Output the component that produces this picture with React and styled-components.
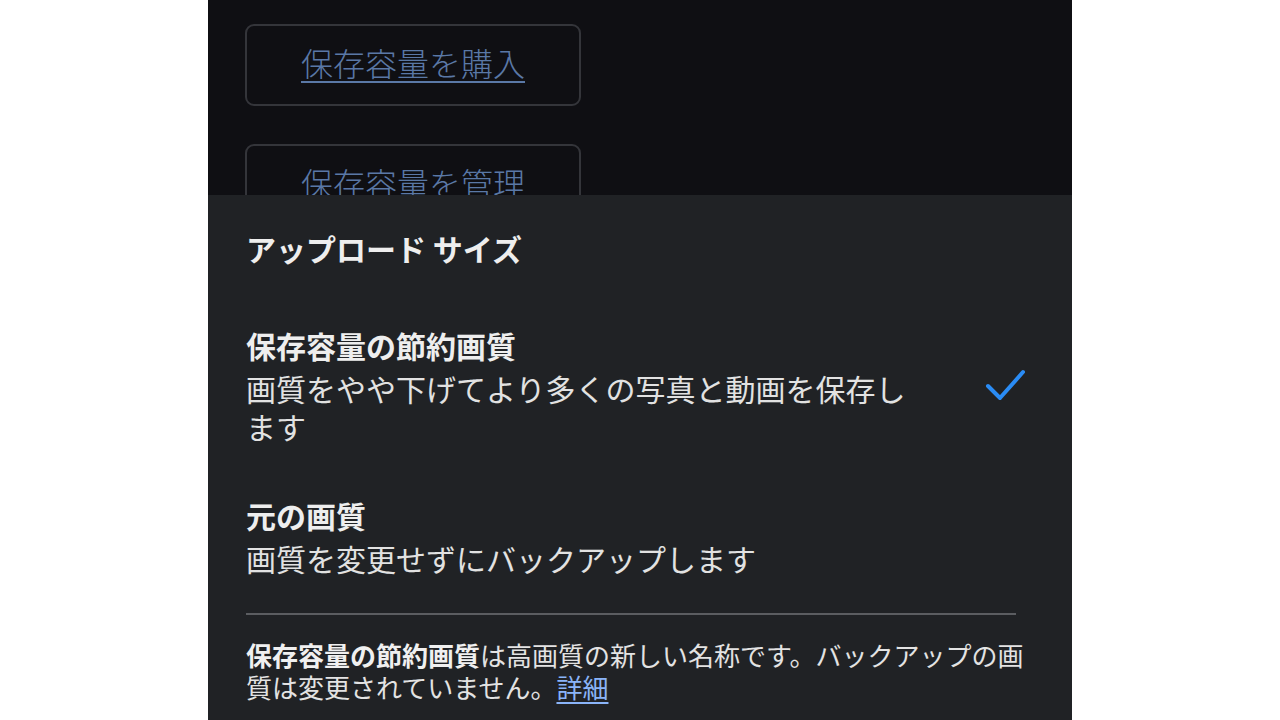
import React from 'react';
import styled, { createGlobalStyle } from 'styled-components';

const GlobalStyle = createGlobalStyle`
    body {
        margin: 0;
        background: #ffffff;
        font-family: "Noto Sans CJK JP", "Noto Sans", sans-serif;
    }
`;

const Screen = styled.div`
    width: 864px;
    height: 720px;
    margin-left: 208px;
    display: flex;
    flex-direction: column;
    overflow: hidden;
    background: #0f0f13;
`;

const Backdrop = styled.div`
    height: 195px;
    flex-shrink: 0;
    padding: 24px 0 0 37px;
    box-sizing: border-box;
    display: flex;
    flex-direction: column;
    gap: 38px;
    overflow: hidden;
`;

const StorageButton = styled.div`
    width: 336px;
    height: 82px;
    flex-shrink: 0;
    box-sizing: border-box;
    padding-bottom: 7px;
    border: 2px solid #34353a;
    border-radius: 9px;
    display: flex;
    align-items: center;
    justify-content: center;
    font-size: 32px;
    font-weight: 300;
    color: #5a78a6;
    text-decoration: ${(p) => (p.$underline ? 'underline' : 'none')};
    text-decoration-thickness: 2px;
    text-underline-offset: 5px;
`;

const Sheet = styled.div`
    flex: 1;
    background: #202225;
    padding: 33px 46px 0 38px;
    color: #e3e3e3;
`;

const SheetTitle = styled.div`
    font-size: 30px;
    font-weight: 700;
    line-height: 40px;
    color: #eeeeee;
`;

const Option = styled.div`
    display: flex;
    align-items: center;
    margin-top: ${(p) => p.$top}px;
`;

const OptionText = styled.div`
    max-width: 680px;
`;

const OptionTitle = styled.div`
    font-size: 30px;
    font-weight: 700;
    line-height: 40px;
    color: #eeeeee;
`;

const OptionDesc = styled.div`
    margin-top: 4px;
    font-size: 30px;
    line-height: 38px;
    color: #e2e2e2;
`;

const Check = styled.svg`
    margin-left: auto;
    flex-shrink: 0;
`;

const Divider = styled.div`
    height: 2px;
    background: #5b5d61;
    margin: 36px 10px 0 0;
`;

const Footer = styled.p`
    margin: 24px 0 0;
    width: 790px;
    font-size: 26px;
    line-height: 32px;
    color: #e3e3e3;

    b {
        font-weight: 700;
        color: #f0f0f0;
    }
`;

const Link = styled.a`
    color: #8ab4f8;
    text-decoration: underline;
    text-underline-offset: 4px;
`;

const App = () => {
    return (
        <>
            <GlobalStyle />
            <Screen>
                <Backdrop>
                    <StorageButton $underline>保存容量を購入</StorageButton>
                    <StorageButton>保存容量を管理</StorageButton>
                </Backdrop>
                <Sheet>
                    <SheetTitle>アップロード サイズ</SheetTitle>
                    <Option $top={57}>
                        <OptionText>
                            <OptionTitle>保存容量の節約画質</OptionTitle>
                            <OptionDesc>画質をやや下げてより多くの写真と動画を保存します</OptionDesc>
                        </OptionText>
                        <Check width="42" height="32" viewBox="0 0 42 32">
                            <polyline points="4,17 16,29 39,3" fill="none" stroke="#2a8cf5" strokeWidth="4" strokeLinecap="round" strokeLinejoin="round" />
                        </Check>
                    </Option>
                    <Option $top={50}>
                        <OptionText>
                            <OptionTitle>元の画質</OptionTitle>
                            <OptionDesc>画質を変更せずにバックアップします</OptionDesc>
                        </OptionText>
                    </Option>
                    <Divider />
                    <Footer>
                        <b>保存容量の節約画質</b>は高画質の新しい名称です。バックアップの画質は変更されていません。<Link href="#">詳細</Link>
                    </Footer>
                </Sheet>
            </Screen>
        </>
    );
};

export default App
